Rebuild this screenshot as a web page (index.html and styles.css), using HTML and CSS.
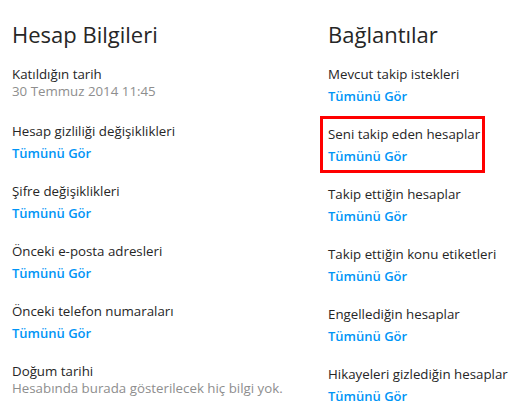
FILE: index.html
```html
<!DOCTYPE html>
<html lang="tr">
<head>
<meta charset="utf-8">
<link rel="stylesheet" href="styles.css">
</head>
<body>
<div class="page">
  <section class="col">
    <h2 class="title">Hesap Bilgileri</h2>
    <div class="item item-info">
      <div class="label">Katıldığın tarih</div>
      <div class="info">30 Temmuz 2014 11:45</div>
    </div>
    <div class="item">
      <div class="label">Hesap gizliliği değişiklikleri</div>
      <a class="link">Tümünü Gör</a>
    </div>
    <div class="item">
      <div class="label">Şifre değişiklikleri</div>
      <a class="link">Tümünü Gör</a>
    </div>
    <div class="item">
      <div class="label">Önceki e-posta adresleri</div>
      <a class="link">Tümünü Gör</a>
    </div>
    <div class="item">
      <div class="label">Önceki telefon numaraları</div>
      <a class="link">Tümünü Gör</a>
    </div>
    <div class="item item-info">
      <div class="label">Doğum tarihi</div>
      <div class="info">Hesabında burada gösterilecek hiç bilgi yok.</div>
    </div>
  </section>
  <section class="col">
    <h2 class="title">Bağlantılar</h2>
    <div class="item">
      <div class="label">Mevcut takip istekleri</div>
      <a class="link">Tümünü Gör</a>
    </div>
    <div class="item highlight">
      <div class="label">Seni takip eden hesaplar</div>
      <a class="link">Tümünü Gör</a>
    </div>
    <div class="item">
      <div class="label">Takip ettiğin hesaplar</div>
      <a class="link">Tümünü Gör</a>
    </div>
    <div class="item">
      <div class="label">Takip ettiğin konu etiketleri</div>
      <a class="link">Tümünü Gör</a>
    </div>
    <div class="item">
      <div class="label">Engellediğin hesaplar</div>
      <a class="link">Tümünü Gör</a>
    </div>
    <div class="item">
      <div class="label">Hikayeleri gizlediğin hesaplar</div>
      <a class="link">Tümünü Gör</a>
    </div>
  </section>
</div>
</body>
</html>
```
FILE: styles.css
```css
html, body {
  margin: 0;
  padding: 0;
  background: #ffffff;
}
body {
  font-family: "Open Sans", "Noto Sans", sans-serif;
  color: #262626;
  font-size: 13.3px;
}
.page {
  display: grid;
  grid-template-columns: 316px 1fr;
  padding: 20px 0 0 12px;
}
.col {
  display: flex;
  flex-direction: column;
  gap: 20px;
}
.title {
  margin: 0 0 -3px 0;
  font-size: 22px;
  line-height: 28px;
  font-weight: 400;
  color: #262626;
}
.item {
  display: flex;
  flex-direction: column;
  align-items: flex-start;
  position: relative;
}
.label {
  line-height: 18px;
}
.link {
  margin-top: 4px;
  font-size: 13px;
  line-height: 18px;
  font-weight: 600;
  color: #0095f6;
}
.info {
  line-height: 17px;
  margin-bottom: 2px;
  color: #8e8e8e;
}
.highlight::after {
  content: "";
  position: absolute;
  left: -8px;
  top: -9px;
  width: 165px;
  height: 57px;
  box-sizing: border-box;
  border: 3px solid #ff0000;
}
```
